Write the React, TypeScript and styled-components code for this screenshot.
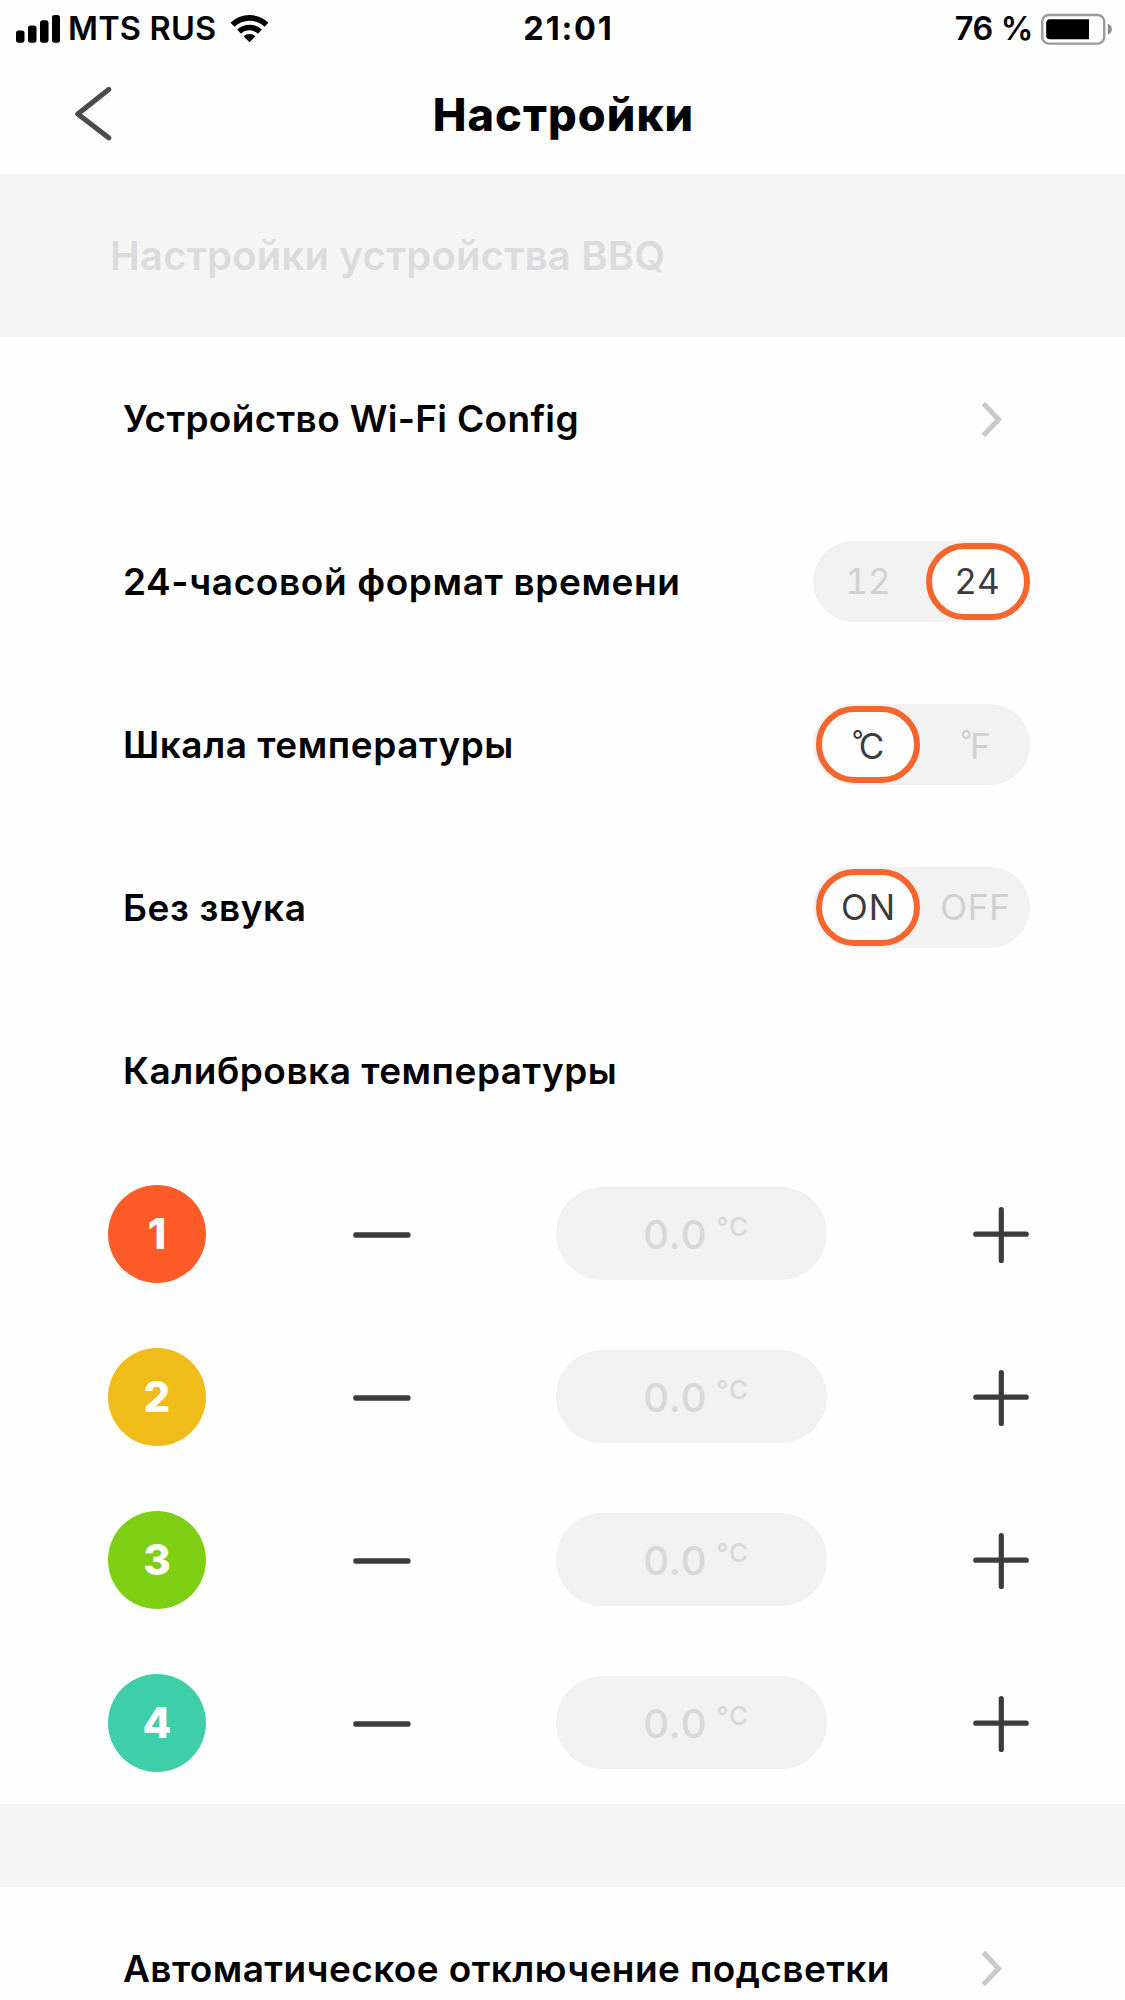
import React, { useState } from 'react';
import styled, { createGlobalStyle } from 'styled-components';

const GlobalStyle = createGlobalStyle`
  *, *::before, *::after { box-sizing: border-box; }
  body {
    margin: 0;
    background: #fefefe;
    font-family: Inter, "Liberation Sans", sans-serif;
    color: #000;
  }
`;

const Screen = styled.div`
  width: 1125px;
  height: 2000px;
  overflow: hidden;
  display: flex;
  flex-direction: column;
  background: #fefefe;
`;

const StatusBar = styled.div`
  flex: none;
  height: 57px;
  padding: 0 13px 0 16px;
  display: grid;
  grid-template-columns: 1fr auto 1fr;
  align-items: center;
  font-size: 32.5px;
  font-weight: 560;
  white-space: nowrap;
`;

const Carrier = styled.div`
  display: flex;
  align-items: center;
  letter-spacing: 0.2px;

  & > span { margin: 0 14px 0 8px; }
`;

const Clock = styled.div`
  padding-left: 9px;
  font-weight: 700;
  letter-spacing: 1.8px;
`;

const Power = styled.div`
  display: flex;
  align-items: center;
  justify-content: flex-end;
  gap: 7px;
  letter-spacing: -0.4px;
`;

const NavBar = styled.header`
  flex: none;
  height: 117px;
  padding: 0 73px 3px 75px;
  display: grid;
  grid-template-columns: 40px 1fr 40px;
  align-items: center;
`;

const IconButton = styled.button`
  display: flex;
  padding: 0;
  border: 0;
  background: none;
`;

const Title = styled.h1`
  margin: 0;
  text-align: center;
  font-size: 45px;
  font-weight: 800;
  letter-spacing: 1.1px;
`;

const SectionHeader = styled.div`
  flex: none;
  height: 163px;
  padding-left: 110px;
  display: flex;
  align-items: center;
  background: #f5f5f5;
  color: #dbdbdd;
  font-size: 40px;
  font-weight: 600;
  letter-spacing: 0.2px;
`;

const SectionGap = styled.div`
  flex: none;
  height: 82.5px;
  background: #f5f5f5;
`;

const Row = styled.div`
  flex: none;
  height: 163px;
  padding: 0 95px 0 123px;
  display: flex;
  align-items: center;
  justify-content: space-between;
`;

const Label = styled.span<{ $tracking: number }>`
  font-size: 37px;
  font-weight: 600;
  letter-spacing: ${(p) => p.$tracking}px;
  white-space: nowrap;
`;

const Disclosure = styled.svg`
  flex: none;
  margin-right: 26px;
`;

const Switch = styled.div`
  width: 217.5px;
  height: 81.5px;
  padding-left: 3.5px;
  display: flex;
  align-items: center;
  gap: 6px;
  border-radius: 41px;
  background: #f1f1f1;
`;

const Option = styled.button<{ $on: boolean; $tracking: number; $shift?: number }>`
  width: 104px;
  height: 77px;
  padding: 0 ${(p) => p.$shift ?? 0}px 2px ${(p) => p.$tracking}px;
  display: flex;
  align-items: center;
  justify-content: center;
  border: 6px solid ${(p) => (p.$on ? '#f5662f' : 'transparent')};
  border-radius: 38.5px;
  background: ${(p) => (p.$on ? '#fefefe' : 'transparent')};
  color: ${(p) => (p.$on ? '#3d3c3c' : '#d0d0d0')};
  font: 400 35px Inter, "Liberation Sans", sans-serif;
  font-variant-numeric: tabular-nums;
  letter-spacing: ${(p) => p.$tracking}px;
`;

const Scale = styled.span`
  padding-top: 4px;
  line-height: 42px;
`;

const Ring = styled.span<{ $overlap: number }>`
  letter-spacing: -${(p) => p.$overlap}px;
  font-size: 26px;
  font-weight: 380;
  line-height: 0;
  vertical-align: 10.5px;
`;

const ProbeRow = styled.div`
  flex: none;
  height: 163px;
  padding: 0 96px 0 108px;
  display: grid;
  grid-template-columns: 98px 349.5px 271px 1fr;
  align-items: center;
`;

const Badge = styled.div<{ $color: string }>`
  width: 98px;
  height: 98px;
  display: flex;
  align-items: center;
  justify-content: center;
  border-radius: 50%;
  background: ${(p) => p.$color};
  color: #fff;
  font-size: 42px;
  font-weight: 800;
`;

const StepButton = styled(IconButton)<{ $end?: boolean }>`
  justify-self: ${(p) => (p.$end ? 'end' : 'center')};
  padding: 3px 0 0 ${(p) => (p.$end ? 0 : 2)}px;
`;

const Reading = styled.div`
  height: 93.5px;
  padding: 1px 0 0 10px;
  display: flex;
  align-items: center;
  justify-content: center;
  gap: 9px;
  border-radius: 47px;
  background: #f1f1f1;
  color: #d8d8d8;
  font-size: 40px;
  font-weight: 540;
  letter-spacing: 0.9px;
`;

const Unit = styled.span`
  padding-bottom: 16px;
  font-size: 26px;
  font-weight: 460;
  letter-spacing: 0.8px;
`;

const SignalIcon = () => (
  <svg width="44" height="28" viewBox="0 0 44 28">
    <rect x="0" y="15.5" width="8.5" height="12.2" rx="2.6" />
    <rect x="12" y="10.5" width="8.5" height="17.2" rx="2.6" />
    <rect x="24" y="5.3" width="8.5" height="22.4" rx="2.6" />
    <rect x="36" y="0" width="8" height="27.7" rx="2.6" />
  </svg>
);

const WifiIcon = () => (
  <svg width="39" height="29" viewBox="0 0 39 29">
    <g fill="none" stroke="#000" strokeWidth="5.7">
      <path d="M2.5 10.7A24.7 24.7 0 0 1 36.5 10.7" />
      <path d="M9.1 17.6A15.3 15.3 0 0 1 29.9 17.6" />
    </g>
    <path d="M19.5 28.2L13.6 22.2A8.9 8.9 0 0 1 25.4 22.2Z" />
  </svg>
);

const BatteryIcon = () => (
  <svg width="72" height="32" viewBox="0 0 72 32">
    <rect x="2.2" y="2" width="62" height="28.6" rx="6.5" fill="none" stroke="#9b9b9b" strokeWidth="2.4" />
    <path d="M49 6.3V26.3H10Q6.2 26.3 6.2 22.5V10.1Q6.2 6.3 10 6.3Z" />
    <path d="M67.8 10.8C70.8 12 71.8 14 71.8 16.3S70.8 20.6 67.8 21.8Z" fill="#8e8e8e" />
  </svg>
);

const BackIcon = () => (
  <svg width="40" height="56" viewBox="0 0 40 56">
    <path d="M33.7 3.5L2.8 28L33.7 51.8" fill="none" stroke="#4b4b4b" strokeWidth="5.2" strokeLinecap="round" strokeLinejoin="round" />
  </svg>
);

const ChevronIcon = () => (
  <Disclosure width="24" height="40" viewBox="0 0 24 40">
    <path d="M3.4 4.5L18.6 20.5L3.4 36.5" fill="none" stroke="#c9c9cb" strokeWidth="5" />
  </Disclosure>
);

const MinusIcon = () => (
  <svg width="58" height="6" viewBox="0 0 58 6">
    <rect x="0.3" y="0.2" width="57.2" height="5.5" rx="2" fill="#3d3b3b" />
  </svg>
);

const PlusIcon = () => (
  <svg width="56" height="56" viewBox="0 0 56 56">
    <path d="M2.8 27.2H53.2M28.3 2.6V53.4" fill="none" stroke="#3d3b3b" strokeWidth="5.2" strokeLinecap="round" />
  </svg>
);

type Choice = { text: string; tracking?: number; shift?: number; degree?: number };

function Toggle({ choices, initial }: { choices: Choice[]; initial: number }) {
  const [selected, setSelected] = useState(initial);
  return (
    <Switch>
      {choices.map((c, i) => (
        <Option
          key={c.text}
          $on={i === selected}
          $tracking={c.tracking ?? 0}
          $shift={c.shift}
          onClick={() => setSelected(i)}
        >
          {c.degree ? (
            <Scale>
              <Ring $overlap={c.degree}>°</Ring>
              {c.text}
            </Scale>
          ) : (
            c.text
          )}
        </Option>
      ))}
    </Switch>
  );
}

const probes = [
  { id: 1, color: '#ff5b28' },
  { id: 2, color: '#f0bc19' },
  { id: 3, color: '#7ece13' },
  { id: 4, color: '#3eceaa' },
];

export default function App() {
  return (
    <>
      <GlobalStyle />
      <Screen>
        <StatusBar>
          <Carrier>
            <SignalIcon />
            <span>MTS RUS</span>
            <WifiIcon />
          </Carrier>
          <Clock>21:01</Clock>
          <Power>
            <span>76 %</span>
            <BatteryIcon />
          </Power>
        </StatusBar>
        <NavBar>
          <IconButton aria-label="Назад">
            <BackIcon />
          </IconButton>
          <Title>Настройки</Title>
        </NavBar>
        <SectionHeader>Настройки устройства BBQ</SectionHeader>
        <Row>
          <Label $tracking={0.33}>Устройство Wi-Fi Config</Label>
          <ChevronIcon />
        </Row>
        <Row>
          <Label $tracking={0.62}>24-часовой формат времени</Label>
          <Toggle
            initial={1}
            choices={[{ text: '12', tracking: 0.2 }, { text: '24', shift: 2 }]}
          />
        </Row>
        <Row>
          <Label $tracking={0.54}>Шкала температуры</Label>
          <Toggle
            initial={0}
            choices={[{ text: 'C', degree: 5 }, { text: 'F', degree: 2, shift: 5 }]}
          />
        </Row>
        <Row>
          <Label $tracking={0.6}>Без звука</Label>
          <Toggle
            initial={0}
            choices={[{ text: 'ON', tracking: 1 }, { text: 'OFF', tracking: 0.8, shift: 6 }]}
          />
        </Row>
        <Row>
          <Label $tracking={0.5}>Калибровка температуры</Label>
        </Row>
        {probes.map((p) => (
          <ProbeRow key={p.id}>
            <Badge $color={p.color}>{p.id}</Badge>
            <StepButton aria-label="Минус">
              <MinusIcon />
            </StepButton>
            <Reading>
              0.0<Unit>°C</Unit>
            </Reading>
            <StepButton $end aria-label="Плюс">
              <PlusIcon />
            </StepButton>
          </ProbeRow>
        ))}
        <SectionGap />
        <Row>
          <Label $tracking={0.41}>Автоматическое отключение подсветки</Label>
          <ChevronIcon />
        </Row>
      </Screen>
    </>
  );
}
